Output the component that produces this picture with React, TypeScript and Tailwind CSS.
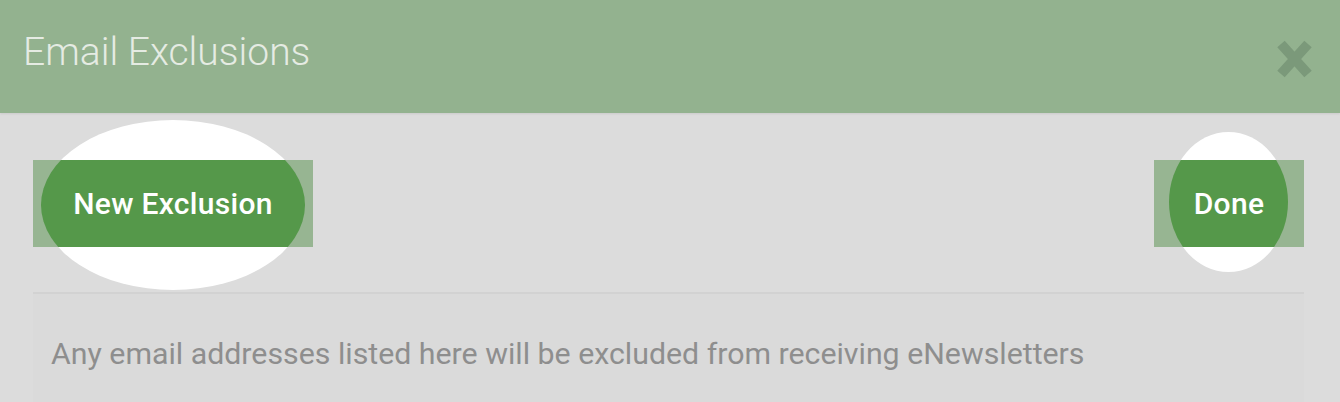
import React from "react";

function HighlightButton({
  label,
  width,
  ellipse,
}: {
  label: string;
  width: number;
  ellipse: { left: number; top: number; width: number; height: number };
}) {
  const ellipseStyle = {
    left: ellipse.left,
    top: ellipse.top,
    width: ellipse.width,
    height: ellipse.height,
  };
  return (
    <div className="relative" style={{ width }}>
      {/* white halo behind the button */}
      <div className="absolute rounded-[50%] bg-white" style={ellipseStyle} />
      <button className="relative z-10 flex h-[87px] w-full items-center justify-center overflow-hidden bg-[#97b592]">
        <span className="absolute rounded-[50%] bg-[#55984a]" style={ellipseStyle} />
        <span className="relative text-[30px] font-medium tracking-[0.3px] text-white">{label}</span>
      </button>
    </div>
  );
}

export default function App() {
  return (
    <div className="h-[402px] w-[1340px] overflow-hidden bg-[#dcdcdc] font-['Roboto',sans-serif]">
      <div className="flex h-[113px] items-center justify-between bg-[#93b28f] pl-[23px] pr-[27px] shadow-[0_1px_2px_rgba(0,0,0,0.08)]">
        <h1 className="pb-[8px] text-[39px] font-light text-[#e5ebe3]">Email Exclusions</h1>
        <svg width="37" height="40" viewBox="0 0 37 40" className="mt-[4px]">
          <path d="M5 5 L32 35 M32 5 L5 35" stroke="#7b997a" strokeWidth="10" strokeLinecap="butt" />
        </svg>
      </div>

      <div className="pl-[33px] pr-[36px]">
        <div className="mt-[47px] flex items-start justify-between">
          <HighlightButton label="New Exclusion" width={280} ellipse={{ left: 8, top: -40, width: 264, height: 170 }} />
          <HighlightButton label="Done" width={150} ellipse={{ left: 15, top: -28, width: 119, height: 140 }} />
        </div>

        <div className="mt-[45px] h-[120px] border-t-2 border-[#d2d2d2] bg-[#dadada] pl-[18px] pt-[37px]">
          <p className="text-[30.3px] text-[#8e8e8e]">
            Any email addresses listed here will be excluded from receiving eNewsletters
          </p>
        </div>
      </div>
    </div>
  );
}
